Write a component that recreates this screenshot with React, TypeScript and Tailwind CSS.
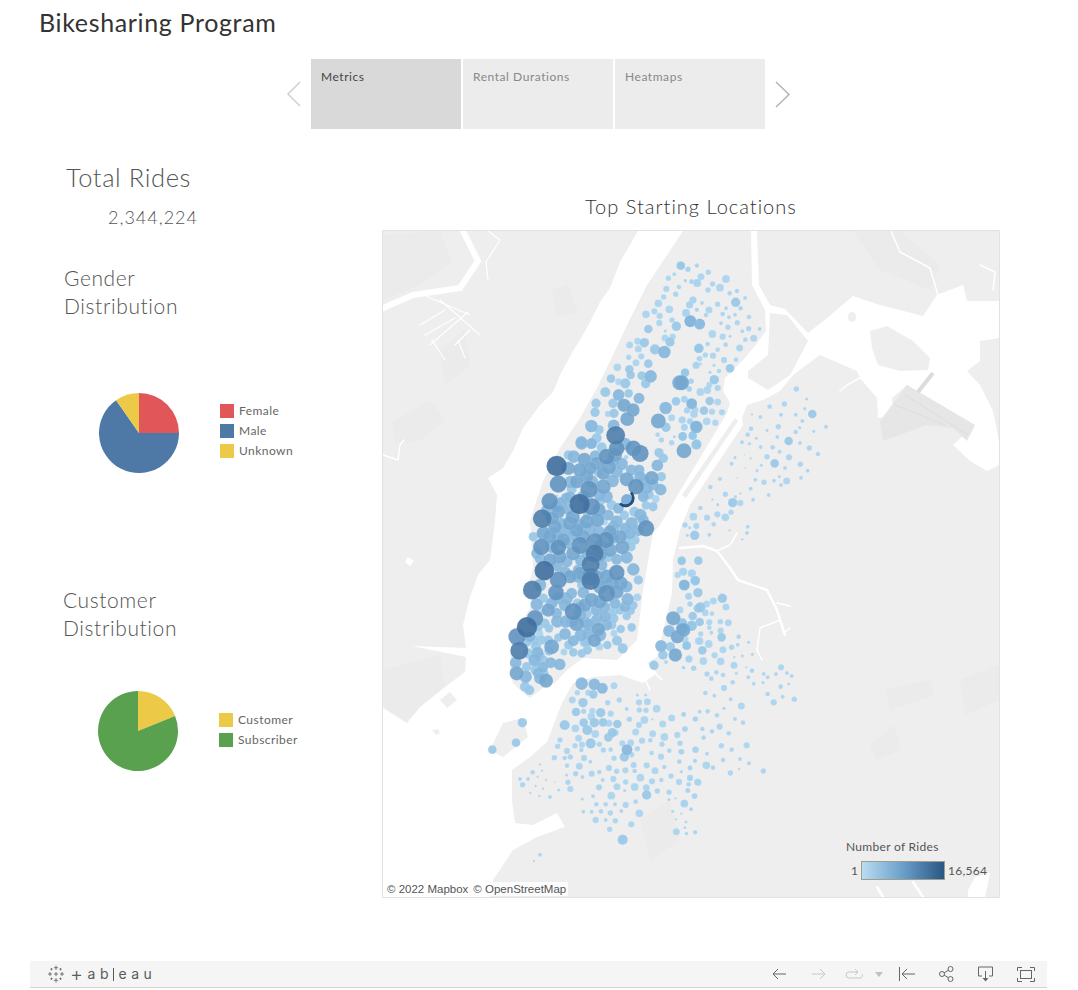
const GROUPS: [number, number, number[]][] = [
  // filler under the midtown / downtown pile
  [500, 440, [150,290,17,190,300,17,230,270,18,260,245,18,300,320,18,330,330,18,360,290,17,330,275,17,220,340,18,180,350,17,240,400,17,300,345,17,395,250,16,320,170,16,260,110,17,230,125,17,310,100,17,350,95,16,440,145,15,420,110,15,460,135,14,140,210,14,200,175,15,210,250,18,175,215,17,165,260,17,100,290,12,110,340,14,380,300,13,430,240,14,355,205,14,250,170,16,210,170,14,205,45,12,290,70,17,340,60,16]],
  [500, 570, [210,20,17,235,20,16,320,20,18,290,20,17,255,105,17,200,85,16,300,95,17,335,40,17,380,50,15,375,110,14,265,165,16,215,155,15,290,150,15,240,135,16,170,130,14,320,165,14,260,215,13,90,200,14,80,215,13,115,170,12,125,210,12,115,310,14,130,310,13,80,290,12,105,300,12,175,85,15,130,85,12,240,110,14,340,145,13,85,250,13,120,260,13]],
  // upper west side + harlem
  [380, 228, [902,113,11,924,124,7,950,112,5,865,151,7,883,139,5,916,158,4,935,161,6,951,165,10,859,183,8,897,177,6,887,199,7,851,207,7,835,226,10,868,244,10,939,216,9,928,230,9,950,245,5,823,250,8,798,259,10,839,264,8,876,276,7,918,255,10,931,279,15,889,295,12,838,285,8,805,303,11,856,309,4,855,330,9,878,326,8,870,342,12,749,351,9,773,340,9,793,344,12,775,363,9,825,364,13,853,372,16,955,362,11,784,385,8,746,388,7,768,404,9,805,407,11,955,392,5,948,412,9,712,418,10,748,424,11,752,441,11,785,443,11,812,445,16,915,434,10,693,452,11,716,461,9,736,466,13,797,467,12,899,464,19,933,460,7,928,483,7,676,492,13,716,501,15,746,496,11,777,511,14,888,520,11,913,514,8,935,526,12,648,526,12,699,526,12,732,532,17,759,546,17,857,540,16,921,547,8,945,545,9,645,553,12,684,558,8,702,556,12,875,569,9,906,576,9,930,580,8,742,573,18,835,579,19,858,598,12,913,598,8,948,595,14,634,594,16,657,605,12,701,592,15,833,620,6,844,636,7,883,626,4,908,625,11,938,623,10,707,622,24,604,642,15,633,648,13,650,630,13,875,644,7,950,648,12]],
  // midtown
  [500, 440, [170,78,26,205,85,17,221,50,16,253,58,17,286,47,14,305,22,13,245,10,16,275,10,14,320,50,20,345,45,18,350,25,20,375,12,16,400,25,20,420,40,22,326,81,19,365,72,16,378,52,6,240,90,18,270,85,17,295,97,12,394,90,14,417,90,14,455,114,18,472,76,15,477,38,12,490,55,12,484,110,12,431,120,14,482,149,15,175,132,22,212,126,16,215,147,13,267,148,22,310,140,19,338,123,16,380,118,18,408,140,20,276,125,16,300,165,16,430,170,14,446,163,13,467,177,10,438,196,11,459,200,12,170,168,4,149,184,21,182,190,16,170,200,15,239,192,26,275,200,22,297,210,17,300,185,12,335,195,13,325,225,14,373,226,12,403,215,13,421,225,16,205,208,14,127,236,24,157,235,17,218,232,18,237,255,16,185,250,14,263,225,12,292,240,18,312,245,10,340,262,16,350,245,16,375,265,14,131,280,18,163,277,14,195,270,16,218,288,14,172,288,16,268,266,16,295,275,16,250,290,17,285,305,22,318,300,21,340,295,14,390,280,15,415,272,14,438,265,21,405,300,12,124,321,21,155,320,16,175,322,20,200,310,14,240,316,22,284,340,23,292,345,18,367,322,18,393,320,12,120,355,14,150,360,17,200,365,15,243,362,15,262,345,15,272,373,23,306,375,14,325,352,12,350,358,14,380,352,16,133,392,25,172,378,14,195,395,14,235,390,14,272,410,22,350,398,20,400,388,16,310,395,10,215,405,10]],
  // lower manhattan
  [500, 570, [175,30,22,120,45,16,97,60,24,168,68,20,110,103,16,155,100,15,145,120,17,195,105,16,128,125,8,215,70,14,245,45,12,272,32,24,250,68,15,300,50,18,362,40,18,415,30,12,320,70,22,350,65,18,275,90,18,220,125,22,232,100,12,383,88,16,412,82,10,400,106,11,392,122,11,345,100,14,290,120,15,262,130,12,315,112,14,315,140,15,360,120,12,380,138,11,340,125,11,105,145,21,81,172,26,51,200,22,58,242,23,47,278,15,50,310,18,77,320,16,75,350,13,88,360,13,135,160,12,147,175,11,118,190,10,172,154,16,197,155,16,230,161,19,258,158,15,295,178,17,195,192,15,175,203,11,243,195,16,264,192,14,300,195,16,283,211,17,220,212,14,145,210,12,103,210,13,253,217,12,206,225,12,108,228,13,155,230,19,147,243,12,113,248,15,104,270,16,132,270,11,152,278,14,179,283,15,128,292,14,335,165,12,342,190,9,362,177,11,395,172,11,351,212,13,322,225,11,298,230,10,368,235,13,262,240,12,245,250,11,220,247,11,192,246,9,138,332,18,120,325,15]],
  // brooklyn
  [380, 560, [427,488,12,408,548,11,337,569,11,605,371,16,643,373,15,667,385,14,702,377,9,592,398,7,625,398,8,640,403,11,577,420,9,609,428,12,683,428,7,718,420,7,777,427,8,802,425,9,772,405,4,797,405,4,740,447,5,830,446,10,588,456,11,611,454,7,637,453,8,662,458,12,692,461,8,778,450,7,798,451,7,634,470,10,875,474,9,911,464,6,946,477,6,554,495,13,586,505,10,611,488,11,643,488,12,669,487,11,687,490,9,712,492,11,748,478,7,793,480,10,777,495,8,817,478,3,848,492,9,622,510,13,596,535,9,646,522,10,697,518,12,685,532,11,707,518,8,767,516,9,818,521,9,853,531,10,892,525,8,915,507,7,540,540,7,632,550,13,606,554,8,658,553,7,727,550,8,752,548,9,786,542,8,811,541,6,846,553,7,900,550,7,533,559,7,585,557,7,561,573,8,604,570,6,670,570,7,692,569,6,741,569,14,772,566,7,755,584,7,815,579,6,868,572,6,903,575,7,947,569,8,523,593,7,554,594,6,571,591,7,612,594,8,702,595,7,733,591,12,843,590,8,631,605,5,898,605,6,945,603,5,598,619,9,561,617,6,687,624,8,761,615,8,800,616,8,736,631,8,710,634,7,764,633,6,825,632,9,853,621,6,904,635,4,930,625,6,480,613,3,458,637,6,486,632,3,420,657,5,444,657,5,428,674,7,473,650,3,498,660,3,525,667,2,587,641,7,635,641,8,658,636,6,607,651,5,560,645,4,781,653,10,700,657,8,668,660,5,873,648,7,930,653,7,564,667,7,816,664,8,737,666,7,844,660,6,897,666,8,952,666,8,467,678,3,536,690,4,489,686,3,571,687,8,657,682,8,711,680,9,764,681,10,799,683,9,734,692,4,832,693,7,867,697,7,923,691,6,451,699,3,478,708,3,510,711,5,607,717,4,639,709,5,694,707,10,800,705,12,867,719,4,886,715,3,767,725,6,943,708,7,649,733,6,677,733,6,705,733,5,737,735,8,913,730,9,933,747,4,610,755,5,635,755,5,663,754,6,691,759,7,724,753,5,778,760,10,878,754,4,904,761,3,647,780,8,677,780,5,706,782,7,888,778,3,754,793,8,915,803,3,689,808,7,889,815,9,919,820,4,945,817,5,728,839,13,480,884,5,462,903,3,880,175,18,867,213,15,906,190,13,892,230,17,905,205,15,935,198,13,843,258,15,871,260,12,886,285,17,849,285,12,822,316,12,858,306,5,910,322,4,940,325,6,927,297,9,920,257,11,955,243,9,954,145,11,900,150,9,930,132,6,912,75,13,945,62,12,908,35,10,935,40,10,893,45,8,905,5,9,925,110,7,772,112,9]],
  // bushwick / bed-stuy
  [680, 560, [36,40,10,10,35,10,13,75,14,46,62,12,26,109,9,54,98,12,127,115,12,100,123,9,138,141,9,80,132,9,61,142,13,30,132,7,76,158,9,96,161,6,38,168,11,8,190,12,59,186,11,35,197,13,88,187,8,121,185,7,145,188,9,88,203,6,122,212,8,94,218,5,62,222,7,125,232,11,10,210,18,15,238,9,59,243,10,86,252,10,176,230,6,206,247,4,173,254,5,155,262,7,129,269,9,20,257,11,67,271,11,104,286,8,163,291,3,187,288,4,217,283,4,27,297,9,70,303,10,122,304,10,162,316,9,11,323,4,41,325,7,199,322,3,216,332,6,303,322,8,81,342,7,109,337,6,129,345,6,169,340,4,251,342,5,288,342,5,321,339,5,335,348,5,94,356,6,205,352,5,263,352,5,158,367,6,221,371,5,249,368,4,326,372,4,132,384,8,302,380,6,76,399,6,103,407,5,263,402,6,308,410,5,343,418,7,152,418,5,281,427,8,184,438,9,132,445,4,59,455,5,83,454,6,11,463,6,111,466,6,46,477,7,165,477,5,189,488,6,67,507,6,96,514,6,119,500,8,146,520,6,15,507,7,71,533,6,124,557,7,200,556,8,46,569,8,155,569,6,81,581,5,5,575,7,129,600,6,45,602,5,180,597,5,207,610,5,79,616,10,99,623,6,30,623,6,177,627,3,151,639,7,250,633,7,30,654,8,54,667,9,26,673,6,24,692,6,44,709,7,13,731,10,33,748,5,18,786,4,15,803,3,20,821,4,46,817,5]],
  // upper east side + queens
  [680, 228, [5,113,9,24,124,6,51,113,5,85,133,7,63,146,9,138,153,10,16,158,4,35,161,6,52,165,10,98,168,7,120,179,10,84,186,7,149,196,6,171,189,6,39,216,9,167,223,12,195,210,5,66,225,5,113,229,7,29,231,9,87,246,9,138,241,5,182,241,6,51,245,5,18,255,10,128,258,6,78,261,6,165,260,5,207,267,6,147,268,5,31,280,15,59,288,14,123,286,5,172,284,7,144,298,7,206,302,7,239,303,5,187,310,5,97,318,10,128,326,8,150,325,4,221,331,9,196,335,6,83,348,6,137,350,6,57,361,12,179,360,9,113,365,6,76,381,7,99,383,8,59,392,7,132,396,8,168,395,6,49,412,9,62,408,4,102,412,4,150,421,11,117,429,6,90,433,4,15,434,11,103,455,12,5,464,19,33,460,7,88,471,8,113,480,8,28,483,7,82,486,10,61,492,10,13,514,9,89,519,11,113,522,9,35,527,14,21,547,8,72,548,11,42,558,10,96,551,8,126,553,8,7,576,9,30,580,8,80,580,10,106,584,8,49,597,16,13,598,9,38,623,11,8,625,11,49,650,13,12,668,19,349,483,7,380,513,4,269,536,6,313,528,7,374,542,4,397,558,11,347,560,5,303,560,5,216,559,3,241,567,5,367,579,5,295,596,7,213,602,6,359,599,4,347,612,6,438,596,5,401,610,4,261,607,4,203,620,6,292,627,5,229,631,4,326,639,11,186,643,5,208,647,4,360,645,5,242,657,5,278,658,6,388,660,7,299,671,5,165,689,4,193,680,2,212,691,3,261,686,7,327,688,8,414,678,6,155,707,5,284,706,11,244,712,4,361,709,7,315,720,5,195,721,2,231,728,4,383,728,5,120,753,5,171,750,2,226,755,5,252,763,7,282,758,5,298,746,4,320,759,9,363,749,5,303,771,5,91,777,6,212,782,5,136,799,7,266,801,5,181,796,3,166,806,4,219,815,5,97,815,3,158,824,12,181,825,8,113,830,4,61,840,6,153,853,7,40,866,10,112,859,8,81,869,8,136,868,10,15,891,7,49,894,8,101,889,6,29,899,4,44,922,12,22,922,4,88,920,5,149,907,3,203,896,5,201,915,5,187,934,3,5,998,11,55,998,11]],
];

// the zoomed crops were read at 3x, so every number gets divided down to page px
const BUBBLES = GROUPS.flatMap(([ox, oy, d]) => {
  const out: { x: number; y: number; r: number }[] = [];
  for (let i = 0; i < d.length; i += 3) out.push({ x: ox + d[i] / 3, y: oy + d[i + 1] / 3, r: d[i + 2] / 3 });
  return out;
}).sort((a, b) => a.r - b.r);

function shade(r: number) {
  if (r <= 3.4) return '#a8d3ee';
  if (r <= 4.4) return '#96c6e7';
  if (r <= 5.4) return '#84b6dc';
  if (r <= 6.4) return '#73a6cf';
  if (r <= 7.4) return '#5f92bf';
  if (r <= 8.2) return '#4d7dab';
  return '#3f6e9e';
}

function TheMap() {
  return (
    <svg viewBox="383 231 616 666" className="block h-full w-full">
      <rect x="383" y="231" width="616" height="666" fill="#eeeeee" />
      {/* soft land patches */}
      <g fill="#ebebeb">
        <path d="M384 235 L440 231 L452 262 L420 285 L384 300 Z" />
        <path d="M552 290 L568 284 L578 312 L556 318 Z" />
        <path d="M392 422 L430 400 L445 420 L420 440 L395 445 Z" />
        <path d="M440 350 L465 330 L470 365 L445 385 Z" />
        <path d="M384 670 L440 655 L445 690 L400 725 L384 705 Z" />
        <path d="M960 680 L999 665 L999 700 L965 715 Z" />
        <path d="M885 690 L930 680 L935 695 L890 710 Z" />
        <path d="M870 745 L895 725 L900 750 L877 760 Z" />
        <path d="M640 820 L670 800 L680 840 L650 860 Z" />
        <path d="M853 231 L900 231 L940 265 L930 290 L880 270 Z" />
      </g>
      <path
        fill="#ffffff"
        d="M638 231 L757 231 L759 285 L770 305 L785 309 L808 333 L827 318 L853 296 L880 305 L923 316 L937 295 L963 285 L967 301 L999 301 L999 338 L980 341 L980 361 L967 371 L980 385 L993 411 L999 441 L999 465 L987 471 L970 461 L953 445 L975 425 L907 385 L892 398 L893 416 L878 418 L877 398 L860 378 L857 371 L820 355 L793 375 L780 391 L763 400 L747 405 L742 418 L743 425 L690 505 L680 530 L673 560 L672 593 L657 657 L647 663 L657 673 L643 683 L620 675 L593 677 L573 683 L562 703 L547 742 L530 757 L512 770 L512 800 L515 823 L533 825 L557 813 L565 827 L537 837 L513 850 L493 880 L490 897 L383 897 L383 708 L407 723 L420 707 L445 687 L465 672 L466 657 L412 646 L466 648 L463 625 L470 597 L478 575 L490 560 L495 521 L497 495 L488 478 L503 468 L513 451 L523 428 L540 405 L553 392 L560 375 L573 351 L580 340 L590 322 L600 302 L610 288 L620 262 Z"
      />
      {/* manhattan */}
      <path
        fill="#eeeeee"
        d="M683 231 L751 231 L752 285 L765 310 L766 331 L755 346 L743 360 L725 378 L723 391 L730 403 L727 413 L680 491 L660 525 L653 533 L643 590 L637 640 L617 660 L583 658 L567 670 L555 683 L543 688 L530 698 L520 690 L513 683 L510 670 L512 637 L523 620 L533 603 L527 590 L533 568 L530 521 L543 481 L560 448 L580 418 L597 388 L613 355 L627 325 L647 285 L667 255 Z"
      />
      <g fill="#eeeeee">
        {/* roosevelt island */}
        <path d="M735 418 L738 421 L686 498 L682 495 Z" />
        {/* randalls */}
        <path d="M748 371 L768 355 L770 313 L787 315 L808 341 L790 375 L768 390 L748 378 Z" />
        {/* rikers */}
        <path d="M870 331 L887 326 L913 341 L930 358 L928 370 L900 371 L878 365 L872 348 Z" />
        <ellipse cx="852" cy="317" rx="4" ry="5" />
        {/* governors island + liberty */}
        <path d="M490 750 L503 723 L523 718 L528 737 L503 757 Z" />
        <path d="M432 730 L438 729 L440 733 L436 735 Z" />
        <path d="M440 700 L450 692 L457 700 L447 708 Z" />
      </g>
      {/* airport */}
      <path fill="#e6e6e6" d="M880 421 L907 385 L975 425 L967 441 L953 428 L927 425 L883 441 Z" />
      <path d="M933 373 L918 392" stroke="#dcdcdc" strokeWidth="4" fill="none" />
      <path d="M905 395 L968 435 M895 405 L945 425" stroke="#dddddd" strokeWidth="1" fill="none" />
      <g stroke="#ffffff" fill="none" strokeLinejoin="round" strokeLinecap="round">
        <path strokeWidth="6" d="M383 308 L413 295 L460 288 L478 261 L463 231" />
        <path strokeWidth="1.2" d="M488 231 L500 240 L486 262 L488 280 M426 296 L470 315 M440 300 L480 335 M432 340 L445 360 M420 325 L445 310 M425 335 L455 318 M430 345 L468 312 M455 345 L470 330 M458 340 L465 358" />
        <path strokeWidth="1.5" d="M383 455 L398 460 L400 445 L404 440" />
        <path strokeWidth="2.5" d="M680 548 L703 546 L717 551 L730 568 L738 580 L767 590 L777 610 L780 620 L785 635" />
        <path strokeWidth="1.5" d="M717 551 L730 545 L737 533 M780 620 L760 628 L757 650 L762 660 M777 603 L790 606 M785 632 L790 628" />
        <path strokeWidth="1.5" d="M891 231 L900 252 L930 268 L938 295 M980 265 L995 272 L993 290 M840 391 L847 385 L860 378" />
        <path strokeWidth="1.5" d="M640 668 L650 690 M650 668 L662 680" />
        <path strokeWidth="2.5" d="M913 882 L923 897 M877 887 L883 897" />
      </g>
      <path fill="#ffffff" d="M968 890 L975 877 L990 873 L985 897 L968 897 Z" />
      <path fill="#ffffff" d="M408 557 L414 561 L410 566 L405 562 Z" />
      {BUBBLES.map((b, i) => (
        <circle key={i} cx={b.x} cy={b.y} r={b.r * 1.18} fill={shade(b.r)} fillOpacity={0.9} stroke="#ffffff" strokeOpacity={0.16} strokeWidth={0.6} />
      ))}
      {/* the one dark ring by grand central */}
      <circle cx="627" cy="500" r="6" fill="#7fb0d8" />
      <path d="M631 492.500 A7.500 7.500 0 0 1 620 503.500" fill="none" stroke="#24507f" strokeWidth="2.800" />
    </svg>
  );
}

function LegendRow({ color, label }: { color: string; label: string }) {
  return (
    <div className="flex h-5 items-center gap-[5px]">
      <span className="h-[14px] w-[14px]" style={{ backgroundColor: color }} />
      <span className="text-[12px] tracking-[0.45px] text-[#666666]">{label}</span>
    </div>
  );
}

function BackIcon({ stroke = '#666666' }: { stroke?: string }) {
  return (
    <svg width="14" height="12" viewBox="0 0 14 12" fill="none" stroke={stroke}>
      <path d="M14 6H1M6 1L1 6l5 5" />
    </svg>
  );
}

function Toolbar() {
  return (
    <div className="ml-[30px] flex h-[27px] w-[1017px] items-center border-b border-[#d4d4d4] bg-[#f5f5f5] pl-[17px] pr-[12px]">
      <svg width="18" height="18" viewBox="0 0 18 18" stroke="#777777" strokeWidth="1" fill="none">
        <path d="M9 .5v4.500M7 2.700h4M9 13v4.500M7 15.300h4M3 7v4M1 9h4M15 7v4M13 9h4M9 7v4M7 9h4M4.500 3v2.400M3.300 4.200h2.400M13.500 3v2.400M12.300 4.200h2.400M4.500 12.600V15M3.300 13.800h2.400M13.500 12.600V15M12.300 13.800h2.400" />
      </svg>
      <span className="ml-[5px] flex items-center gap-[4.500px] font-['Inter',sans-serif] text-[14px] leading-none text-[#5a5a5a]">
        <span className="text-[20px] font-light">+</span>
        <span>a</span>
        <span>b</span>
        <span className="h-[13px] w-px bg-[#5a5a5a]" />
        <span>e</span>
        <span>a</span>
        <span>u</span>
      </span>
      <div className="ml-auto flex items-center">
        <BackIcon />
        <span className="ml-[26px] -scale-x-100">
          <BackIcon stroke="#c8c8c8" />
        </span>
        <svg className="ml-[19px]" width="18" height="12" viewBox="0 0 18 12" fill="none" stroke="#c8c8c8">
          <path d="M13 4H4a3 3 0 0 0 0 6h11a2.500 2.500 0 0 0 2-4M10 1l3 3-3 3" />
        </svg>
        <svg className="ml-[12px]" width="8" height="5" viewBox="0 0 8 5" fill="#c0c0c0">
          <path d="M0 0h8L4 5z" />
        </svg>
        <svg className="ml-[16px]" width="16" height="16" viewBox="0 0 16 16" fill="none" stroke="#666666">
          <path d="M.5 1v14M16 8H3M8 3L3 8l5 5" />
        </svg>
        <svg className="ml-[24px]" width="15" height="16" viewBox="0 0 15 16" fill="none" stroke="#666666">
          <circle cx="3" cy="8" r="2.500" />
          <circle cx="11.500" cy="3" r="2.500" />
          <circle cx="11.500" cy="13" r="2.500" />
          <path d="M5.200 6.800L9.300 4.300M5.200 9.200l4.100 2.500" />
        </svg>
        <svg className="ml-[24px]" width="15" height="16" viewBox="0 0 15 16" fill="none" stroke="#666666">
          <path d="M4 10H.5V1h14v9H11M7.500 5v8" />
          <path d="M4.500 12h6l-3 3.500z" fill="#666666" stroke="none" />
        </svg>
        <svg className="ml-[24px]" width="18" height="15" viewBox="0 0 18 15" fill="none" stroke="#666666">
          <path d="M.5 4V.5H5M13 .5h4.500V4M.5 11v3.500H5M13 14.500h4.500V11" />
          <rect x="3.500" y="3.500" width="11" height="8" />
        </svg>
      </div>
    </div>
  );
}

const TABS = ['Metrics', 'Rental Durations', 'Heatmaps'];

export default function App() {
  return (
    <div className="flex h-[990px] w-[1078px] flex-col overflow-hidden bg-white font-['Lato',sans-serif]">
      <h1 className="pl-[39px] pt-[7px] text-[25px] font-normal leading-[30px] tracking-[0.65px] text-[#333333]">Bikesharing Program</h1>

      <nav className="mt-[22px] flex h-[70px] items-center pl-[286px]">
        <svg width="15" height="26" viewBox="0 0 15 26" fill="none" stroke="#d0d0d0" strokeWidth="1.5">
          <path d="M14 1L2 13l12 12" />
        </svg>
        <div className="ml-[10px] flex gap-[2px]">
          {TABS.map((tab, i) => (
            <div
              key={tab}
              className={
                i === 0
                  ? 'h-[70px] w-[150px] bg-[#d9d9d9] pl-[10px] pt-[9px] text-[12px] tracking-[0.55px] text-[#444444]'
                  : 'h-[70px] w-[150px] bg-[#ececec] pl-[10px] pt-[9px] text-[12px] tracking-[0.55px] text-[#888888]'
              }
            >
              {tab}
            </div>
          ))}
        </div>
        <svg className="ml-[10px]" width="16" height="27" viewBox="0 0 16 27" fill="none" stroke="#b4b4b4" strokeWidth="1.5">
          <path d="M1 1l13 12.500L1 26" />
        </svg>
      </nav>

      <div className="flex flex-1">
        <aside className="relative w-[382px] text-[#555555]">
          <h2 className="pl-[66px] pt-[32px] text-[25.500px] font-light leading-[32px] tracking-[0.6px]">Total Rides</h2>
          <p className="pl-[108px] pt-[12px] text-[18px] font-light leading-[24px] tracking-[1px]">2,344,224</p>
          <h2 className="pl-[64px] pt-[35px] text-[21px] font-light leading-[28px] tracking-[0.6px]">
            Gender
            <br />
            Distribution
          </h2>
          <div className="mt-[73px] flex items-center pl-[99px]">
            <svg width="80" height="80" viewBox="0 0 80 80">
              <path d="M40 40V0A40 40 0 0 1 80 40Z" fill="#e15759" />
              <path d="M40 40H80A40 40 0 1 1 17.060 7.230Z" fill="#4e79a7" />
              <path d="M40 40L17.060 7.230A40 40 0 0 1 40 0Z" fill="#edc948" />
            </svg>
            <div className="mb-[4px] ml-[41px]">
              <LegendRow color="#e15759" label="Female" />
              <LegendRow color="#4e79a7" label="Male" />
              <LegendRow color="#edc948" label="Unknown" />
            </div>
          </div>
          <h2 className="pl-[63px] pt-[113px] text-[21px] font-light leading-[28px] tracking-[0.6px]">
            Customer
            <br />
            Distribution
          </h2>
          <div className="mt-[49px] flex items-center pl-[98px]">
            <svg width="80" height="80" viewBox="0 0 80 80">
              <path d="M40 40V0A40 40 0 0 1 77.090 25.020Z" fill="#edc948" />
              <path d="M40 40L77.090 25.020A40 40 0 1 1 40 0Z" fill="#59a14f" />
            </svg>
            <div className="mb-[2px] ml-[41px]">
              <LegendRow color="#edc948" label="Customer" />
              <LegendRow color="#59a14f" label="Subscriber" />
            </div>
          </div>
        </aside>

        <section className="w-[618px]">
          <h2 className="pl-[203px] pt-[63px] text-[20px] font-light leading-[28px] tracking-[1px] text-[#333333]">Top Starting Locations</h2>
          <div className="relative mt-[10px] h-[668px] w-[618px] border border-[#e2e2e2]">
            <TheMap />
            <div className="absolute bottom-[1px] left-[2px] flex gap-[5px] bg-white/80 px-[2px] font-['Liberation_Sans',sans-serif] text-[11.500px] leading-[14px] text-[#555555]">
              <span>© 2022 Mapbox</span>
              <span>© OpenStreetMap</span>
            </div>
            <div className="absolute bottom-[17px] left-[463px] text-[12px] text-[#555555]">
              <div className="leading-[16px] tracking-[0.3px]">Number of Rides</div>
              <div className="mt-[6px] flex h-[19px] items-center">
                <span className="w-[15px] pl-[5px] text-[12px]">1</span>
                <span className="h-[19px] w-[84px] border border-[#a09c8e] bg-gradient-to-r from-[#b9ddf1] via-[#6b9fc9] to-[#2a5783]" />
                <span className="ml-[3px] tracking-[0.3px]">16,564</span>
              </div>
            </div>
          </div>
        </section>
      </div>

      <Toolbar />
      <div className="h-[2px]" />
    </div>
  );
}
